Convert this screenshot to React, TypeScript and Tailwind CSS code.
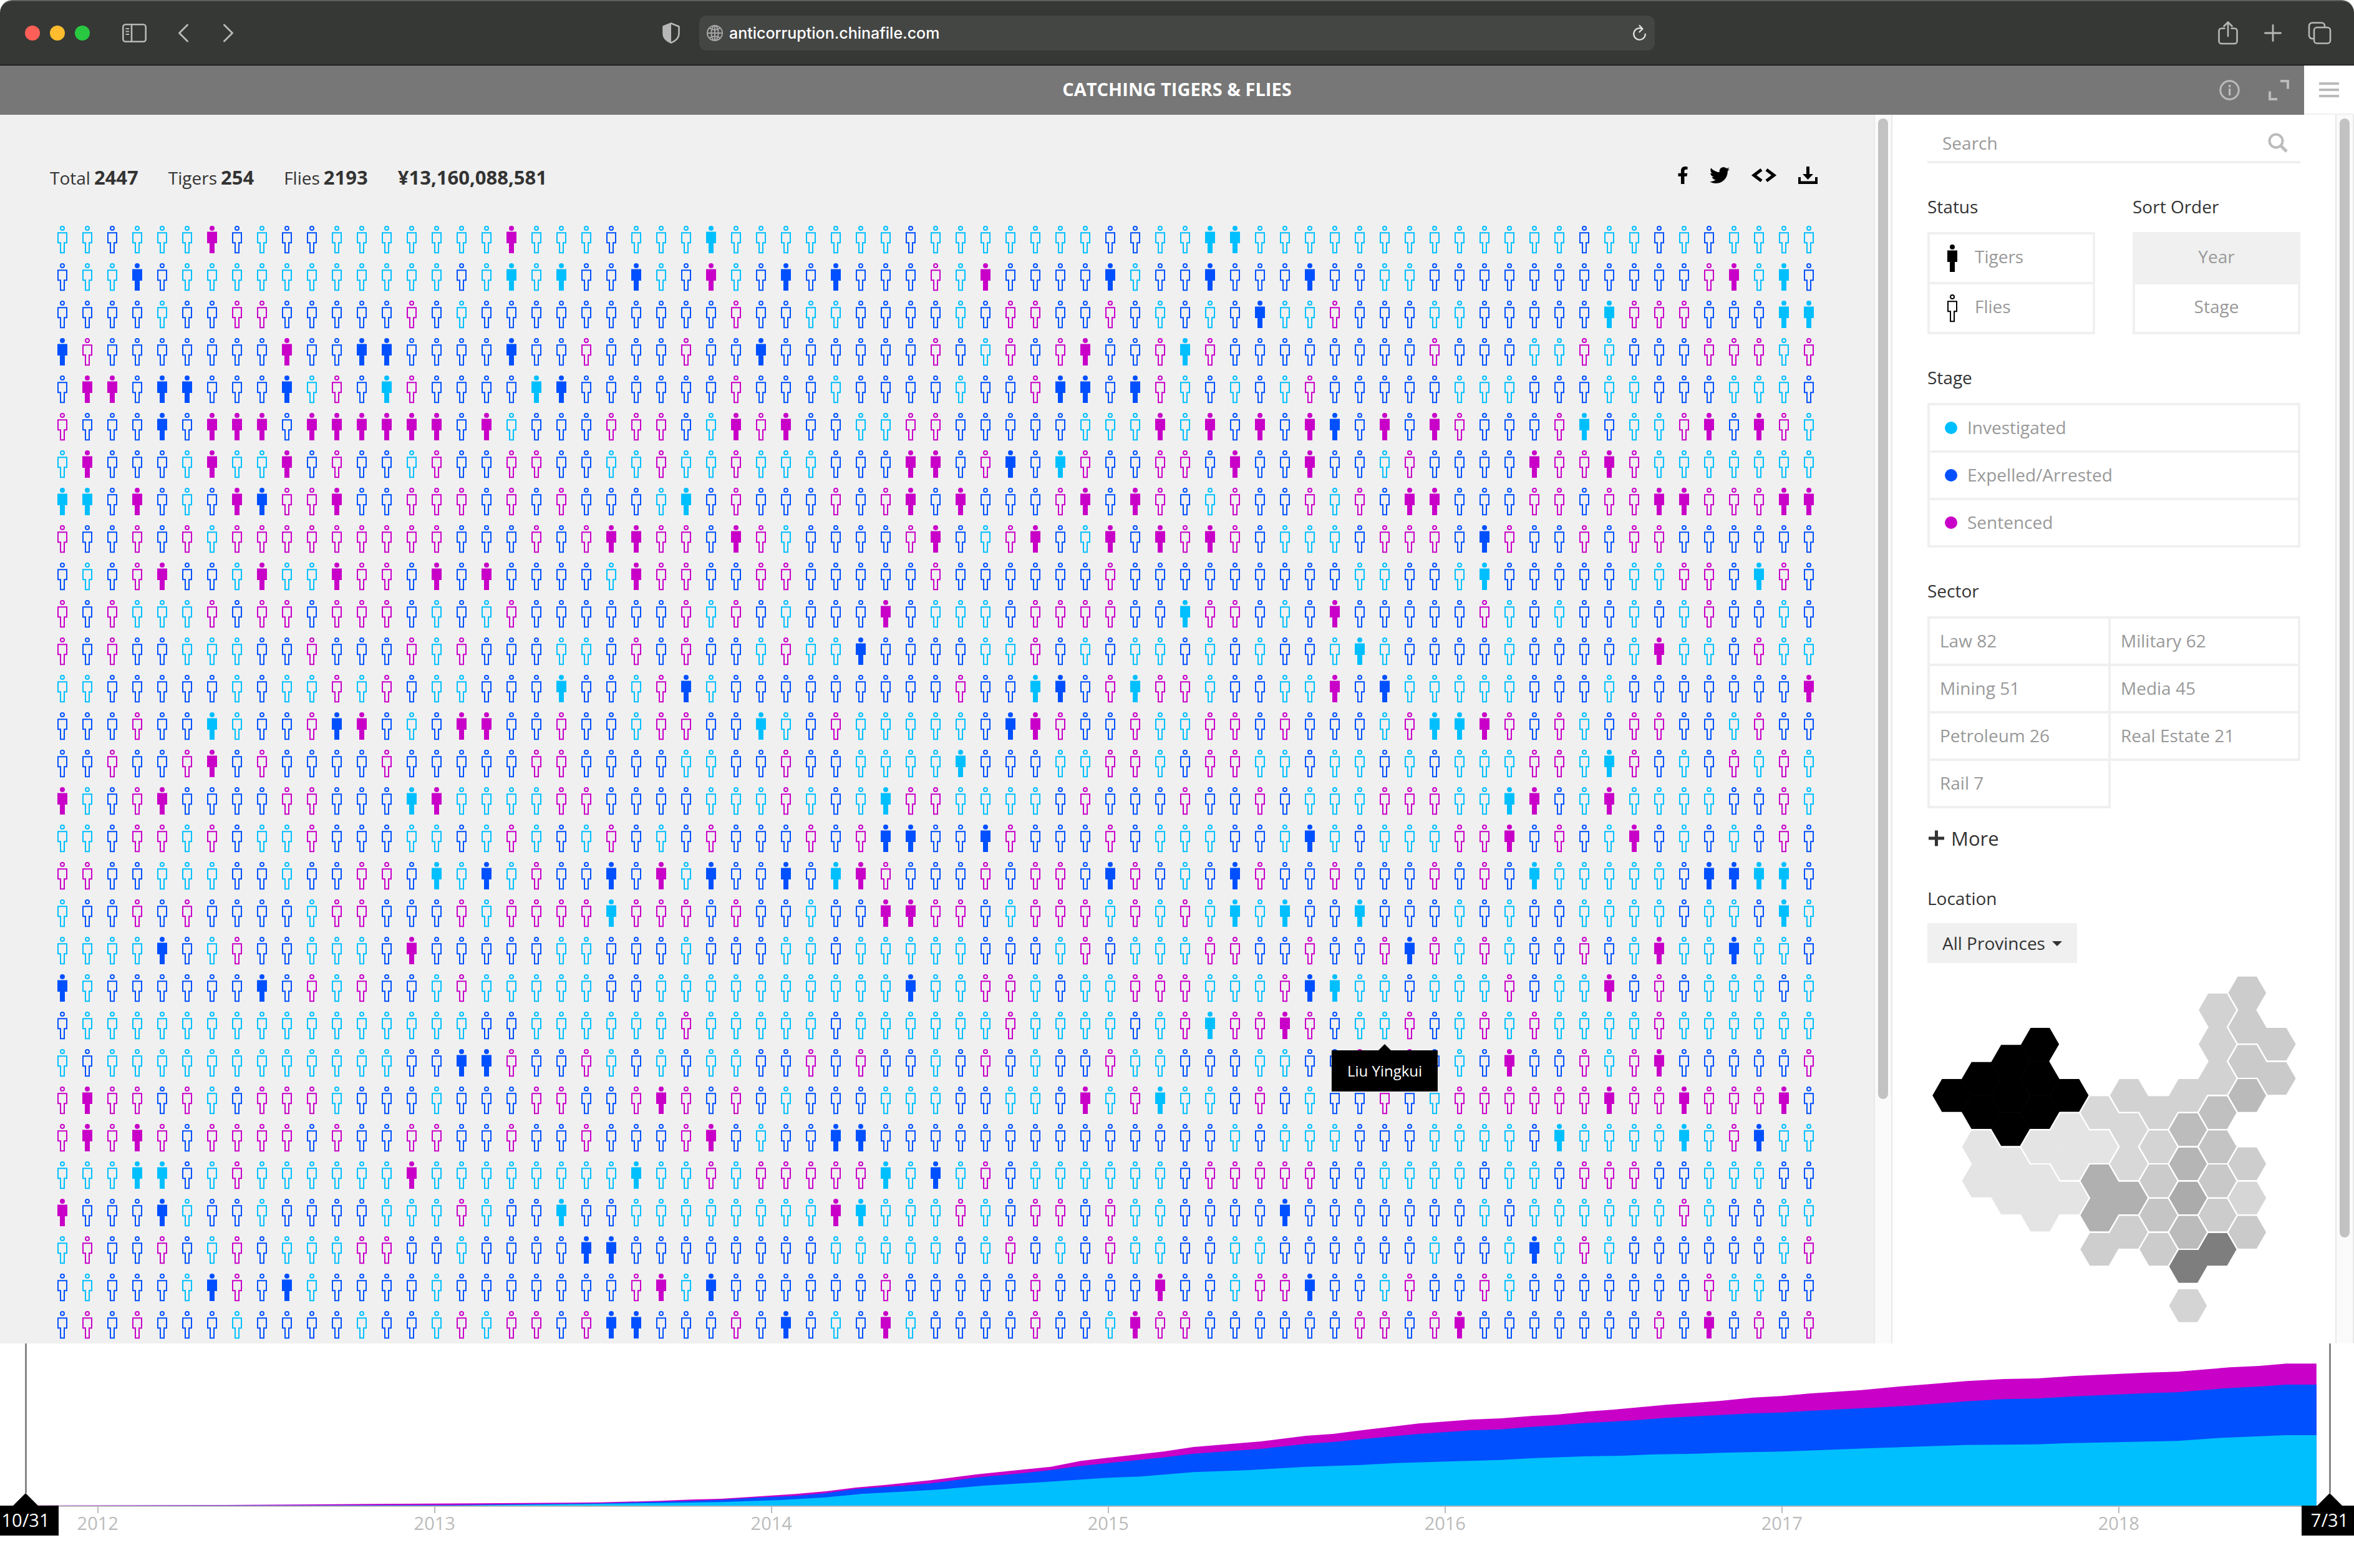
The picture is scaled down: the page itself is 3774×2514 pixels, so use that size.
import React from "react";
import { FaFacebookF, FaTwitter } from "react-icons/fa";

/* One letter per person: c investigated, b expelled or arrested, m sentenced.
   Capital letters are tigers, small letters are flies. */
const PEOPLE: string[] = [
  "ccbccc Mbcbbc cccccc Mcccbc ccCccc ccccbc ccccc cbbcc CCccc ccccc ccccc bccbc bcccc",
  "bccBbc cccccc ccccbc CcCbbB cbMcbB bBbbbm cMbbb bBcbb BbbbB bbccb bbbbb bbbbb mMcCb",
  "bbbbcb bmmbbb bbmbcb bbbbbb bbbmbb ccbbbb cbmmb bmbcb cbBcc mbbbc cbbbb bCmmm bbbCC",
  "Bmbbbb bbbMbb BBbbbb Bbbmbb bmbbBb bbbbbm bcmbm MbbmC mbbbb bbbbm bbbcc mcbbb mmmcm",
  "bMMbBB bbbBcm bCmbbb bCBbbb bbbmbb bcbbbb cbbmB BbBmc bcbcm bbbbb cccbb bccbb bcccb",
  "mbbbBb MMMbMM MMMMbM cbbbmm mbcMmM bbccmm bbbbb cccMc MbMbM BbMbM mbbbm Cbccm MbMmc",
  "cMbbbc MccMbm bbcmbb mmbbcc mccmcc cbbbMM bmBbC mbbmm bMbbM bbcmb bbbMm mMmcc ccccc",
  "CCbMbc bMBmmM bbmmmb mbmbbb cCbmbb bmbmMb Mbbbm MbMmb cmbbm cmbMM bbbmm bmmMM mmmMM",
  "mbbmbm cmmmmm mmmmbb bmbmMM mmbMmc bbbbmM bcmMb cMbMm Mmbcc cbmmm bBmbb mbmmb bbbbb",
  "bcbmMb bcMccM mmbMbM bbbbcM mmbbmm bbbbbm bbbbb bmbbb bbbbb bccbb cCbbb bbccm mbCmb",
  "mbmccc mbmmbm mmbcbc mbbbbb bmcmbc bbbMbc ccbmm mmbbC mmbcb Mbbbb bmcbc bbcbc mbbcb",
  "mbmbbc ccbbmb bbmcmb bbccbm bmbbcm ccBbbb bccmb cbccb cbcbb cCcbb bbcbb bbcMc cbmcc",
  "ccbbbb bcbccm cmbccb bbCbbc mBcbbb bbbbbb mbbCB bmCmm cbbcc MbBcc cccbb bcbbb bbbbM",
  "bbbmbb CcbbmB MbcbMM bbmbbc mmbbCc bmcccc cbBMm bbmcc mmbmb bbcmC CMmbm cbmmb bcmbb",
  "bbmbbm Mbmbbb bmbbbb bmmbbb bccbbm bbcccc Cbbbc cmmcb mmccb ccbcb cccmm cCmbc bmcmc",
  "McbmMb bbbmmb bbCMcc ccmmbb bbcccm cbcCmm ccccb mbbbm bbmbc ccmmm ccCMb cMccc cbbmc",
  "ccbmmc mbccmb bbccbc mcbcmb cbmbbb mbmBBb bBmbb bmbcc cbbcB cbccc mmMbm bcMbc bcbmb",
  "mmbbcc cbbcbb mmbCcB cmbbBb McBbbB bCMmbb bmbmm bBmbc bBmbb mbbbm bmbCc ccccb BBCCb",
  "cbbmbm bbbbcm mbbbmc mmmmCm mmbmbb cbbMMm mbcmm mcmcm cCcCb bCbbb cbcbb ccccb ccbCc",
  "ccccBb cmbbcc cbMbbb bbccbb bcbbbc cbcccc cbbbc mbccc mmbbm bbmBm cmcbb mbcMc cBccb",
  "Bcbbbb bbBbmc mbbcmc ccccbb cccccc ccccBc cmmcb ccmmm cccmB Cccbc ccmbc cMbmb cccbc",
  "bccccc cccccc cccccb bccccc cmcccc cbcccc ccmcc ccbcm CmmMm bccmb cmcmc cccmc ccccc",
  "cbcccc cccccc ccbbBB mbbmcb cbccbb mbmbbc bmbcb bmccb bbccb bmbmb cbMbb mcmMb bbbbm",
  "mMmmbm cbmmmc bbbcbb bmmbbm Mmbmbc bbbccc bbccb McmCc cbmbc bbmbc mmmmm mMmmM mmmMb",
  "mMmMmb mmmmbm bbmmbb mbbmbb bmMbcb bBBbbb bbbbb bbbbb bcbcc cbbbc cccbC ccccC cmBcc",
  "cccCCb cmcccc ccMccc cccccC ccmcmm mmmCcB cmbcc ccccb mmmmm bbccc cbccb mmmbb cccbb",
  "MbbbBc bbcbbb bcccmc bbCbbc cccccc cMCccc mcbmm bmccb bbbBb bbbbb bcbcc ccccm cbbcc",
  "cmbbmb cmbccc mmbbcb bbbBBb bbbbbb bccccc bcmbc bmccb bccbb bbbbc bbcBc mcbbb bbbcm",
  "bcbbbc BmbBcb bbbcbb bbbbbm McBbbb bbbmbb bbbmb bbbMb bcmmB bbcmb bmcbb bbbbb mccbb",
  "bmbmbb bcbbbb cbbcmc mmbmBB bbbmbB bcbMcb bbbmb bcMmm bbbbb bmmbm Mbbbb bbbmb Mbmbm",
];

const ROWS = PEOPLE.map((row) => row.replace(/ /g, ""));
const SELECTED = { row: 21, col: 53, name: "Liu Yingkui" };

const STAGE_TEXT: Record<string, string> = {
  c: "text-[#00bfff]",
  b: "text-[#0050ff]",
  m: "text-[#c800c8]",
};

function Person({ filled }: { filled: boolean }) {
  return (
    <svg width="16" height="45" viewBox="0 0 16 45" className="block shrink-0" aria-hidden="true">
      {filled ? (
        <g fill="currentColor">
          <ellipse cx="8" cy="4" rx="4" ry="4" />
          <path d="M0 9.6H16V28H12V44H4V28H0Z" />
        </g>
      ) : (
        <g fill="none" stroke="currentColor" strokeWidth="2">
          <circle cx="8" cy="4" r="3" />
          <path d="M1 11.3H15V27.3H11V43.3H5V27.3H1Z" />
        </g>
      )}
    </svg>
  );
}

function BrowserBar() {
  return (
    <div className="bg-white">
      <div className="grid h-[105px] grid-cols-[1fr_1532px_1fr] items-center rounded-t-[20px] border-t-2 border-b border-t-[#5c5e5c] border-b-black bg-[#363836] text-[#b6b7b6]">
        <div className="flex items-center pr-[31px] pl-10">
          <div className="flex gap-4">
            <span className="size-6 rounded-full bg-[#ff5f57]" />
            <span className="size-6 rounded-full bg-[#febc2e]" />
            <span className="size-6 rounded-full bg-[#28c840]" />
          </div>
          <button aria-label="Show sidebar" className="ml-[52px]">
            <svg width="39" height="30" viewBox="0 0 39 30" fill="none" stroke="currentColor" strokeWidth="2.6">
              <rect x="1.3" y="1.3" width="36.4" height="27.4" rx="4" />
              <path d="M15 1V29" />
              <path d="M5.5 8H11M5.5 12.5H11M5.5 17H11" strokeWidth="2" />
            </svg>
          </button>
          <button aria-label="Back" className="ml-[50px]">
            <svg width="18" height="30" viewBox="0 0 18 30" fill="none" stroke="currentColor" strokeWidth="3" strokeLinecap="round" strokeLinejoin="round">
              <path d="M15.5 2L2.5 15L15.5 28" />
            </svg>
          </button>
          <button aria-label="Forward" className="ml-[54px]">
            <svg width="18" height="30" viewBox="0 0 18 30" fill="none" stroke="currentColor" strokeWidth="3" strokeLinecap="round" strokeLinejoin="round">
              <path d="M2.5 2L15.5 15L2.5 28" />
            </svg>
          </button>
          <button aria-label="Privacy report" className="ml-auto">
            <svg width="28" height="34" viewBox="0 0 28 34">
              <path d="M14 1.5L26.5 6.5V18C26.5 25 20 30 14 32.5C8 30 1.5 25 1.5 18V6.5Z" fill="none" stroke="currentColor" strokeWidth="2.6" strokeLinejoin="round" />
              <path d="M14 1.5L1.5 6.5V18C1.5 25 8 30 14 32.5Z" fill="currentColor" />
            </svg>
          </button>
        </div>
        <div className="flex h-14 items-center rounded-xl bg-[#444644] px-3">
          <svg width="26" height="26" viewBox="0 0 26 26" fill="none" stroke="#a3a4a3" strokeWidth="2" aria-hidden="true">
            <circle cx="13" cy="13" r="12" />
            <ellipse cx="13" cy="13" rx="5.6" ry="12" />
            <path d="M13 1V25M1 13H25" />
            <path d="M4.5 5C9 8.6 17 8.6 21.5 5M4.5 21C9 17.4 17 17.4 21.5 21" />
          </svg>
          <input
            aria-label="Address"
            defaultValue="anticorruption.chinafile.com"
            className="ml-2.5 min-w-0 flex-1 bg-transparent font-[Inter,sans-serif] text-[25px] leading-8 font-medium text-white outline-none"
          />
          <button aria-label="Reload" className="text-[#e3e3e3]">
            <svg width="24" height="28" viewBox="0 0 24 28" fill="none" stroke="currentColor" strokeWidth="2.2" strokeLinecap="round" strokeLinejoin="round">
              <path d="M16 7.3A9.3 9.3 0 1 0 20.8 15.5" />
              <path d="M11.5 2L16.5 7.3L11.3 12.3" />
            </svg>
          </button>
        </div>
        <div className="flex items-center justify-end gap-[42px] pr-9">
          <button aria-label="Share">
            <svg width="32" height="38" viewBox="0 0 32 38" fill="none" stroke="currentColor" strokeWidth="2.6" strokeLinecap="round" strokeLinejoin="round">
              <path d="M10.5 11.5H5.5A4 4 0 0 0 1.5 15.5V32A4 4 0 0 0 5.5 36H26.5A4 4 0 0 0 30.5 32V15.5A4 4 0 0 0 26.5 11.5H21.5" />
              <path d="M16 24V1.8M9.5 8L16 1.5L22.5 8" />
            </svg>
          </button>
          <button aria-label="New tab">
            <svg width="28" height="28" viewBox="0 0 28 28" stroke="currentColor" strokeWidth="2.8" strokeLinecap="round">
              <path d="M14 1.4V26.6M1.4 14H26.6" />
            </svg>
          </button>
          <button aria-label="Show all tabs">
            <svg width="38" height="36" viewBox="0 0 38 36" fill="none" stroke="currentColor" strokeWidth="2.6">
              <rect x="10" y="9" width="26" height="25.5" rx="4.5" />
              <path d="M10 27H7A5 5 0 0 1 2 22V6.5A5 5 0 0 1 7 1.5H22A5 5 0 0 1 27 6.5V9" />
            </svg>
          </button>
        </div>
      </div>
    </div>
  );
}

function SiteHeader() {
  return (
    <header className="grid h-[79px] shrink-0 grid-cols-[1fr_auto_1fr] items-center bg-[#777]">
      <span />
      <h1 className="pb-1 text-[29px] leading-10 font-bold text-white">CATCHING TIGERS &amp; FLIES</h1>
      <div className="flex h-full items-center justify-end text-[#bbb]">
        <button aria-label="About" className="mr-[46px]">
          <svg width="33" height="33" viewBox="0 0 33 33" fill="none">
            <circle cx="16.5" cy="16.5" r="14.7" stroke="currentColor" strokeWidth="3" />
            <rect x="15" y="8" width="3.2" height="4" fill="currentColor" />
            <rect x="15" y="14" width="3.2" height="11" fill="currentColor" />
          </svg>
        </button>
        <button aria-label="Full screen" className="mr-6">
          <svg width="33" height="33" viewBox="0 0 33 33" fill="none" stroke="currentColor" strokeWidth="4">
            <path d="M19 2H31V14.5M2 18.5V31H14" />
          </svg>
        </button>
        <button aria-label="Menu" className="flex h-full w-20 flex-col items-center justify-center gap-1.5 border-b-2 border-[#f0f0f0] bg-white">
          <span className="h-1 w-8 bg-[#bbb]" />
          <span className="h-1 w-8 bg-[#bbb]" />
          <span className="h-1 w-8 bg-[#bbb]" />
        </button>
      </div>
    </header>
  );
}

function Stat({ label, value }: { label?: string; value: string }) {
  return (
    <p className="flex items-baseline gap-1.5">
      {label && <span>{label}</span>}
      <strong className="text-[31px] font-bold">{value}</strong>
    </p>
  );
}

function PeoplePane() {
  return (
    <main className="min-w-0 flex-1 overflow-hidden bg-[#f0f0f0] pt-20">
      <div className="flex h-10 items-center justify-between pr-[90px] pl-20">
        <div className="flex items-center gap-12 text-[28px] leading-10">
          <Stat label="Total" value="2447" />
          <Stat label="Tigers" value="254" />
          <Stat label="Flies" value="2193" />
          <Stat value="¥13,160,088,581" />
        </div>
        <div className="flex items-center pb-1.5 text-black">
          <a href="#facebook" aria-label="Facebook" className="mr-8">
            <FaFacebookF size={28} className="w-[22px]" />
          </a>
          <a href="#twitter" aria-label="Twitter" className="mr-[34px]">
            <FaTwitter size={32} />
          </a>
          <a href="#embed" aria-label="Embed" className="mr-[34px]">
            <svg width="42" height="22" viewBox="0 0 42 22" fill="none" stroke="currentColor" strokeWidth="5">
              <path d="M17 2L5 11L17 20M25 2L37 11L25 20" />
            </svg>
          </a>
          <a href="#download" aria-label="Download">
            <svg width="31" height="28" viewBox="0 0 31 28" fill="currentColor">
              <path d="M13 0H18V12H24L15.5 21L7 12H13Z" />
              <path d="M0 17H4V23.5H27V17H31V28H0Z" />
            </svg>
          </a>
        </div>
      </div>
      <ul className="mt-[50px] grid grid-cols-[repeat(auto-fill,40px)] px-20">
        {ROWS.map((row, r) =>
          row.split("").map((code, c) => {
            const stage = code.toLowerCase();
            const selected = r === SELECTED.row && c === SELECTED.col;
            return (
              <li key={`${r}-${c}`} className={`${selected ? "relative " : ""}flex h-[60px] justify-center pt-2 ${STAGE_TEXT[stage]}`}>
                <Person filled={code !== stage} />
                {selected && (
                  <div role="tooltip" className="absolute top-full left-1/2 z-10 flex -translate-x-1/2 flex-col items-center">
                    <svg width="20" height="10" viewBox="0 0 20 10" className="block">
                      <path d="M10 0L20 10H0Z" fill="#000" />
                    </svg>
                    <span className="bg-black px-[25px] py-4 text-2xl leading-[34px] whitespace-nowrap text-white">{SELECTED.name}</span>
                  </div>
                )}
              </li>
            );
          }),
        )}
      </ul>
    </main>
  );
}

function ScrollTrack({ thumb }: { thumb: string }) {
  return (
    <div className="flex w-[30px] shrink-0 justify-center border-x-2 border-[#e9e9e9] bg-[#fafafa] pt-1.5">
      <div className={`w-4 rounded-full bg-[#c2c2c2] ${thumb}`} />
    </div>
  );
}

function Heading({ children }: { children: React.ReactNode }) {
  return <h2 className="mt-[49px] mb-[21px] leading-10 text-[#333]">{children}</h2>;
}

const STAGES = [
  { name: "Investigated", dot: "bg-[#00bfff]" },
  { name: "Expelled/Arrested", dot: "bg-[#0050ff]" },
  { name: "Sentenced", dot: "bg-[#c800c8]" },
];

const SECTORS = ["Law 82", "Military 62", "Mining 51", "Media 45", "Petroleum 26", "Real Estate 21", "Rail 7"];

/* Each province is a list of [column, half row] hexagons. */
const PROVINCES: { fill: string; cells: [number, number][] }[] = [
  { fill: "#cccccc", cells: [[10, 0], [10, 2], [11, 3]] },
  { fill: "#d2d2d2", cells: [[9, 1], [9, 3], [9, 5], [8, 6], [7, 7], [6, 6]] },
  { fill: "#cacaca", cells: [[10, 4], [11, 5]] },
  { fill: "#bababa", cells: [[10, 6]] },
  { fill: "#000000", cells: [[3, 3], [2, 4], [3, 5], [1, 5], [0, 6], [2, 6], [1, 7], [3, 7], [4, 6], [2, 8]] },
  { fill: "#e4e4e4", cells: [[1, 9], [1, 11], [2, 10], [2, 12], [3, 11], [3, 13], [4, 12]] },
  { fill: "#e4e4e4", cells: [[3, 9], [4, 8], [4, 10], [5, 9]] },
  { fill: "#d8d8d8", cells: [[5, 7], [6, 8], [6, 10]] },
  { fill: "#d4d4d4", cells: [[7, 9]] },
  { fill: "#cbcbcb", cells: [[7, 11]] },
  { fill: "#c5c5c5", cells: [[7, 13]] },
  { fill: "#cccccc", cells: [[7, 15]] },
  { fill: "#b0b0b0", cells: [[5, 11], [5, 13], [6, 12]] },
  { fill: "#cecece", cells: [[6, 14], [5, 15]] },
  { fill: "#bcbcbc", cells: [[8, 8]] },
  { fill: "#b5b5b5", cells: [[8, 10]] },
  { fill: "#ababab", cells: [[8, 12]] },
  { fill: "#bbbbbb", cells: [[8, 14]] },
  { fill: "#7e7e7e", cells: [[8, 16], [9, 15]] },
  { fill: "#c0c0c0", cells: [[9, 7]] },
  { fill: "#c4c4c4", cells: [[9, 9]] },
  { fill: "#c8c8c8", cells: [[9, 11]] },
  { fill: "#cccccc", cells: [[9, 13]] },
  { fill: "#cdcdcd", cells: [[10, 10]] },
  { fill: "#d6d6d6", cells: [[10, 12]] },
  { fill: "#cacaca", cells: [[10, 14]] },
  { fill: "#d4d4d4", cells: [[8, 18.3]] },
];

const HALF_W = 31.6;
const HALF_H = 27.4;

/* Neighbour across each edge, in the order of the corners. */
const NEIGHBOURS: [number, number][] = [
  [-1, -1],
  [0, -2],
  [1, -1],
  [1, 1],
  [0, 2],
  [-1, 1],
];

function corners([col, half]: [number, number]): [number, number][] {
  const x = 38.5 + col * 47.43;
  const y = 28 + half * HALF_H;
  return [
    [x - HALF_W, y],
    [x - HALF_W / 2, y - HALF_H],
    [x + HALF_W / 2, y - HALF_H],
    [x + HALF_W, y],
    [x + HALF_W / 2, y + HALF_H],
    [x - HALF_W / 2, y + HALF_H],
  ];
}

/* An edge is part of the border when no hexagon of the province lies across it. */
function borderPath(cells: [number, number][]) {
  const own = new Set(cells.map((cell) => cell.join()));
  return cells
    .flatMap((cell) => {
      const pts = corners(cell);
      return NEIGHBOURS.map(([dx, dy], i) => {
        if (own.has([cell[0] + dx, cell[1] + dy].join())) return "";
        const [p, q] = [pts[i], pts[(i + 1) % 6]];
        return `M${p[0]} ${p[1]}L${q[0]} ${q[1]}`;
      });
    })
    .join("");
}

function ProvinceMap() {
  return (
    <svg viewBox="0 0 598 560" className="mt-5 block w-full" role="img" aria-label="Cases by province">
      {PROVINCES.map(({ fill, cells }, i) => (
        <g key={i} fill={fill} stroke={fill} strokeWidth="0.8">
          {cells.map((cell) => (
            <polygon key={cell.join()} points={corners(cell).map((p) => p.join()).join(" ")} />
          ))}
        </g>
      ))}
      <g fill="none" stroke="#fff" strokeWidth="2.2" strokeLinecap="round">
        {PROVINCES.map(({ cells }, i) => (
          <path key={i} d={borderPath(cells)} />
        ))}
      </g>
    </svg>
  );
}

function FilterPane() {
  return (
    <aside className="w-[710px] shrink-0 overflow-hidden bg-white px-14 text-[28px] text-[#999]">
      <label className="flex h-[78px] items-center border-b-4 border-[#f0f0f0] pt-4 pr-5 pl-6">
        <input type="text" aria-label="Search" placeholder="Search" className="min-w-0 flex-1 bg-transparent leading-10 outline-none placeholder:text-[#999]" />
        <svg width="32" height="32" viewBox="0 0 32 32" fill="none" stroke="#bbb" strokeWidth="4" aria-hidden="true">
          <circle cx="13" cy="13" r="10.5" />
          <path d="M20.5 20.5L30 30" strokeWidth="5" />
        </svg>
      </label>

      <div className="grid grid-cols-2 gap-[60px]">
        <section>
          <Heading>Status</Heading>
          <div className="flex flex-col pb-1">
            <button aria-pressed="true" className="-mb-1 flex h-[84px] items-center gap-7 border-4 border-[#f0f0f0] pl-7 text-left">
              <span className="text-black"><Person filled /></span>
              <span className="pb-1.5">Tigers</span>
            </button>
            <button aria-pressed="true" className="-mb-1 flex h-[84px] items-center gap-7 border-4 border-[#f0f0f0] pl-7 text-left">
              <span className="text-black"><Person filled={false} /></span>
              <span className="pb-1.5">Flies</span>
            </button>
          </div>
        </section>
        <section>
          <Heading>Sort Order</Heading>
          <div className="flex flex-col pb-1">
            <button aria-pressed="true" className="-mb-1 h-[84px] border-4 border-[#f0f0f0] bg-[#f0f0f0] pb-1.5">Year</button>
            <button aria-pressed="false" className="-mb-1 h-[84px] border-4 border-[#f0f0f0] pb-1.5">Stage</button>
          </div>
        </section>
      </div>

      <section>
        <Heading>Stage</Heading>
        <div className="flex flex-col pb-1">
          {STAGES.map(({ name, dot }) => (
            <button key={name} className="-mb-1 flex h-20 items-center gap-4 border-4 border-[#f0f0f0] pl-6 text-left">
              <span className={`size-5 rounded-full ${dot}`} />
              <span className="pb-0.5">{name}</span>
            </button>
          ))}
        </div>
      </section>

      <section>
        <Heading>Sector</Heading>
        <div className="mr-1 grid grid-cols-[290px_1fr] pb-1">
          {SECTORS.map((name) => (
            <button key={name} className="-mr-1 -mb-1 h-20 border-4 border-[#f0f0f0] px-4 pb-0.5 text-left">
              {name}
            </button>
          ))}
        </div>
        <button className="mt-7 flex items-center gap-2.5 text-[31px] leading-10 text-[#333]">
          <svg width="28" height="26" viewBox="0 0 28 26" stroke="currentColor" strokeWidth="5" aria-hidden="true">
            <path d="M14.5 0.5V25.5M2 13H27" />
          </svg>
          More
        </button>
      </section>

      <section className="pt-2">
        <h2 className="mt-12 mb-5 leading-10 text-[#333]">Location</h2>
        <div className="relative h-16 w-60 bg-[#f0f0f0] text-[#333]">
          <select aria-label="Location" className="h-full w-full appearance-none pr-10 pl-6 outline-none">
            <option>All Provinces</option>
          </select>
          <svg width="16" height="8" viewBox="0 0 16 8" className="pointer-events-none absolute top-[29px] right-6" aria-hidden="true">
            <path d="M0 0H16L8 8Z" fill="currentColor" />
          </svg>
        </div>
        <ProvinceMap />
      </section>
    </aside>
  );
}

const TOTAL_LINE =
  "25,821 150,819 250,814 380,808 400,806 440,799 460,793 480,789 500,780 530,766 550,753 570,735 590,722 620,700 650,672 675,653 700,635 720,607 740,590 775,562 795,540 840,513 870,486 888,477 910,457 945,427 980,408 1000,402 1020,391 1037,384 1055,371 1075,360 1110,337 1145,319 1168,302 1187,295 1205,283 1240,266 1265,249 1285,238 1310,223 1335,213 1357,210 1380,199 1430,182 1450,178 1485,157 1505,150 1523,139 1543,139";
const ARRESTED_LINE =
  "25,822 250,820 300,819 400,811 440,803 480,794 505,783 530,775 550,762 570,742 600,727 620,715 650,687 680,667 700,651 720,631 740,616 775,590 795,572 840,549 870,525 888,516 910,500 945,477 980,460 1000,455 1020,443 1037,436 1055,425 1090,411 1110,400 1165,379 1187,374 1205,366 1250,350 1275,340 1310,320 1335,310 1357,307 1380,297 1430,281 1450,277 1480,259 1505,249 1523,240 1543,240";
const INVESTIGATED_LINE =
  "25,822 300,822 370,816 440,809 480,805 520,795 550,782 575,765 600,755 625,745 655,726 695,709 735,689 760,682 795,661 830,652 870,635 905,627 930,617 1000,602 1020,594 1055,585 1080,582 1100,576 1130,572 1150,567 1187,562 1210,556 1245,546 1310,530 1357,527 1380,521 1430,514 1450,511 1480,496 1523,483 1543,483";

const YEARS = ["2012", "2013", "2014", "2015", "2016", "2017", "2018"];

function Handle({ label, place }: { label: string; place: string }) {
  return (
    <button aria-label={`Date handle ${label}`} className={`absolute top-0 flex flex-col items-center ${place}`}>
      <span className="h-60 w-[3px] bg-[#888]" />
      <svg width="40" height="20" viewBox="0 0 40 20" className="block">
        <path d="M20 0L40 20H0Z" fill="#000" />
      </svg>
      <span className="block h-12 w-full bg-black text-center text-[29px] leading-[46px] font-medium text-white">{label}</span>
    </button>
  );
}

function Timeline() {
  return (
    <footer className="relative h-[360px] shrink-0 overflow-hidden bg-white">
      <svg viewBox="0 42 1568 780" preserveAspectRatio="none" className="block h-[260px] w-full" role="img" aria-label="Cases over time">
        <polygon fill="#c800c8" points={`25,822 ${TOTAL_LINE} 1543,822`} />
        <polygon fill="#0050ff" points={`25,822 ${ARRESTED_LINE} 1543,822`} />
        <polygon fill="#00bfff" points={`25,822 ${INVESTIGATED_LINE} 1543,822`} />
      </svg>
      <div className="mr-[60px] ml-10 h-0.5 bg-[#bbb]" />
      <ol className="ml-[-3%] grid w-[100.16%] grid-cols-7">
        {YEARS.map((year) => (
          <li key={year} className="flex flex-col items-center text-[29px] leading-8 text-[#bbb]">
            <span className="h-2.5 w-0.5 bg-[#bbb]" />
            {year}
          </li>
        ))}
      </ol>
      <Handle label="10/31" place="-left-3 w-[106px]" />
      <Handle label="7/31" place="-right-1.5 w-[90px]" />
    </footer>
  );
}

export default function App() {
  return (
    <div className="flex h-screen flex-col overflow-hidden bg-white font-['Open_Sans',sans-serif] text-[#333]">
      <BrowserBar />
      <SiteHeader />
      <div className="flex min-h-0 flex-1">
        <PeoplePane />
        <ScrollTrack thumb="h-[1572px]" />
        <FilterPane />
        <ScrollTrack thumb="h-[1794px]" />
      </div>
      <Timeline />
    </div>
  );
}
